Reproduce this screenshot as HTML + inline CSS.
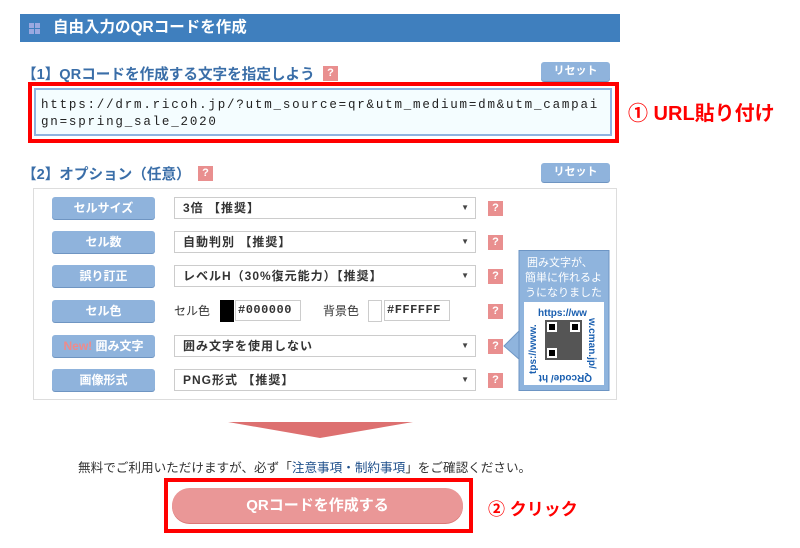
<!DOCTYPE html>
<html><head><meta charset="utf-8"><style>
*{margin:0;padding:0;box-sizing:border-box}
body{width:800px;height:548px;background:#fff;position:relative;overflow:hidden;font-family:"Liberation Sans","Noto Sans CJK JP",sans-serif;color:#333}
.a{position:absolute}
.hdr{left:20px;top:14px;width:600px;height:28px;background:#3f7fbe;color:#fff;font-weight:bold;font-size:15.5px;line-height:28px;padding-left:33px}
.ico{left:9px;top:9px;width:11px;height:11px;display:grid;grid-template-columns:5px 5px;gap:1px}
.ico i{background:#9aa8e0}
.lbl{color:#3a6ea8;font-weight:bold;font-size:14.6px}
.q{width:15px;height:15px;background:#e98f8f;color:#fff;font-size:11px;font-weight:bold;text-align:center;line-height:15px}
.rst{width:69px;height:19px;background:#8fb3dc;border-radius:3px;color:#fff;font-size:11px;font-weight:bold;text-align:center;line-height:19px;box-shadow:0 1px 0 #6f95c2}
.red{border:4px solid #f00}
.ta{background:#f4fdff;border:2px solid #8fb3e0;font-family:"Liberation Mono","Noto Sans CJK JP",monospace;font-size:12.5px;letter-spacing:1.8px;line-height:17px;padding:7px 5px;color:#222}
.ann{color:#f00;font-weight:bold;font-size:17px}
.box{left:33px;top:188px;width:584px;height:212px;border:1px solid #ddd}
.btn{left:52px;width:103px;height:22px;background:#8fb3dc;border-radius:3px;color:#fff;font-size:12px;font-weight:bold;text-align:center;line-height:22px;box-shadow:0 1px 0 #6f95c2}
.sel{left:174px;width:302px;height:22px;border:1px solid #ccc;font-size:12px;letter-spacing:1px;line-height:20px;padding-left:8px;color:#333;font-weight:bold}
.sel:after{content:"▼";position:absolute;right:5px;top:0;font-size:8px;color:#444}
.qq{left:488px}
</style></head><body>
<div class="a hdr"><div class="a ico"><i></i><i></i><i></i><i></i></div>自由入力のQRコードを作成</div>
<div class="a lbl" style="left:22px;top:63px">【1】QRコードを作成する文字を指定しよう</div>
<div class="a q" style="left:323px;top:66px">?</div>
<div class="a rst" style="left:541px;top:62px">リセット</div>
<div class="a red" style="left:28px;top:82px;width:591px;height:61px"></div>
<div class="a ta" style="left:34px;top:88px;width:578px;height:48px">https://drm.ricoh.jp/?utm_source=qr&amp;utm_medium=dm&amp;utm_campai<br>gn=spring_sale_2020</div>
<div class="a ann" style="left:628px;top:97px;font-size:20px">① URL貼り付け</div>
<div class="a lbl" style="left:22px;top:163px">【2】オプション（任意）</div>
<div class="a q" style="left:198px;top:166px">?</div>
<div class="a rst" style="left:541px;top:163px">リセット</div>
<div class="a box"></div>
<div class="a btn" style="top:197px">セルサイズ</div>
<div class="a sel" style="top:197px">3倍 【推奨】</div>
<div class="a q qq" style="top:201px">?</div>
<div class="a btn" style="top:231px">セル数</div>
<div class="a sel" style="top:231px">自動判別 【推奨】</div>
<div class="a q qq" style="top:235px">?</div>
<div class="a btn" style="top:265px">誤り訂正</div>
<div class="a sel" style="top:265px">レベルH（30%復元能力）【推奨】</div>
<div class="a q qq" style="top:269px">?</div>
<div class="a btn" style="top:300px">セル色</div>
<div class="a" style="left:174px;top:302px;font-size:12px;line-height:18px">セル色</div>
<div class="a" style="left:220px;top:300px;width:14px;height:22px;background:#000"></div>
<div class="a" style="left:235px;top:300px;width:66px;height:21px;border:1px solid #ccc;font-family:'Liberation Mono',monospace;font-size:12px;font-weight:bold;line-height:19px;padding-left:2px;letter-spacing:.5px">#000000</div>
<div class="a" style="left:323px;top:302px;font-size:12px;line-height:18px">背景色</div>
<div class="a" style="left:368px;top:300px;width:14px;height:22px;border:1px solid #ccc"></div>
<div class="a" style="left:384px;top:300px;width:66px;height:21px;border:1px solid #ccc;font-family:'Liberation Mono',monospace;font-size:12px;font-weight:bold;line-height:19px;padding-left:2px;letter-spacing:.5px">#FFFFFF</div>
<div class="a q qq" style="top:304px">?</div>
<div class="a btn" style="top:335px"><span style="color:#f08a8a">New!</span> 囲み文字</div>
<div class="a sel" style="top:335px">囲み文字を使用しない</div>
<div class="a q qq" style="top:339px">?</div>
<div class="a btn" style="top:369px">画像形式</div>
<div class="a sel" style="top:369px">PNG形式 【推奨】</div>
<div class="a q qq" style="top:373px">?</div>
<svg class="a" style="left:500px;top:250px" width="115" height="145">
<polygon points="20,80 4,96 20,110" fill="#8fb4dd" stroke="#6d95c4"/>
<rect x="19" y="0.5" width="90" height="140" fill="#8fb4dd" stroke="#6d95c4"/>
<rect x="24" y="52" width="80" height="83" fill="#fff"/>
<text x="27" y="16" fill="#fff" font-size="11" font-family="Noto Sans CJK JP">囲み文字が、</text>
<text x="25" y="31" fill="#fff" font-size="11" font-family="Noto Sans CJK JP">簡単に作れるよ</text>
<text x="25" y="46" fill="#fff" font-size="11" font-family="Noto Sans CJK JP">うになりました</text>
<text x="38" y="66" fill="#1a5fb0" font-size="10" font-weight="bold" font-family="Liberation Sans">https://ww</text>
<text x="0" y="0" fill="#1a5fb0" font-size="10" font-weight="bold" font-family="Liberation Sans" transform="translate(89,68) rotate(90)">w.cman.jp/</text>
<text x="0" y="0" fill="#1a5fb0" font-size="10" font-weight="bold" font-family="Liberation Sans" transform="translate(92,125) rotate(180)">QRcode/ ht</text>
<text x="0" y="0" fill="#1a5fb0" font-size="10" font-weight="bold" font-family="Liberation Sans" transform="translate(36,124) rotate(-90)">tps://www.</text>
<rect x="45" y="70" width="37" height="40" fill="#555"/>
<rect x="47" y="72" width="10" height="10" fill="#fff"/><rect x="49" y="74" width="6" height="6" fill="#000"/>
<rect x="70" y="72" width="10" height="10" fill="#fff"/><rect x="72" y="74" width="6" height="6" fill="#000"/>
<rect x="47" y="98" width="10" height="10" fill="#fff"/><rect x="49" y="100" width="6" height="6" fill="#000"/>
</svg>
<svg class="a" style="left:228px;top:422px" width="185" height="17"><polygon points="0,0 185,0 92,16" fill="#dd7070"/></svg>
<div class="a" style="left:78px;top:457px;font-size:12.6px;color:#333">無料でご利用いただけますが、必ず「<span style="color:#1d4e8a">注意事項・制約事項</span>」をご確認ください。</div>
<div class="a red" style="left:164px;top:478px;width:309px;height:55px"></div>
<div class="a" style="left:172px;top:488px;width:291px;height:35px;border-radius:18px;background:#ea9797;color:#fff;font-weight:bold;font-size:15px;text-align:center;line-height:35px;box-shadow:0 1px 0 #d77">QRコードを作成する</div>
<div class="a ann" style="left:488px;top:495px">② クリック</div>
</body></html>
